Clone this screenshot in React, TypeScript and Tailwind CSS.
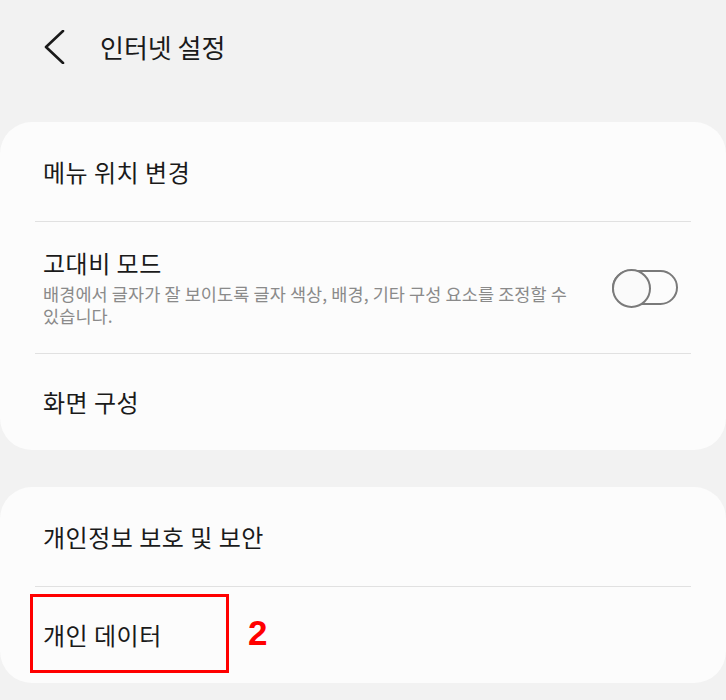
import type { ReactNode } from "react";

const font = { fontFamily: '"Noto Sans CJK KR", "Noto Sans", sans-serif' };

function Divider() {
  return <div className="h-px bg-[#e1e1e1]" />;
}

function Row({ h, children }: { h: string; children: ReactNode }) {
  return <div className={`relative flex items-center pl-2 ${h}`}>{children}</div>;
}

function Toggle() {
  return (
    <div className="relative mr-[13px] h-[35px] w-[66px] shrink-0 rounded-full border-2 border-[#7a7a7a]">
      <div className="absolute -left-[2px] -top-[3px] h-[39px] w-[39px] rounded-full border-2 border-[#7a7a7a] bg-[#fafafa]" />
    </div>
  );
}

export default function App() {
  return (
    <div className="h-[700px] w-[726px] overflow-hidden bg-[#f2f2f2] text-[#1a1a1a]" style={font}>
      {/* Header */}
      <div className="flex h-[94px] items-center">
        <svg className="ml-[44px]" width="21" height="34" viewBox="0 0 21 34" fill="none">
          <polyline points="19,1 2,17 19,33" stroke="#1a1a1a" strokeWidth="2.6" strokeLinecap="round" strokeLinejoin="round" />
        </svg>
        <span className="ml-[35px] text-[26px] leading-none">인터넷 설정</span>
      </div>

      {/* Card 1 */}
      <div className="mt-[28px] rounded-[32px] bg-[#fcfcfc] px-[35px]">
        <Row h="h-[99px]">
          <span className="text-[24px] tracking-[0.5px]">메뉴 위치 변경</span>
        </Row>
        <Divider />
        <Row h="h-[131px]">
          <div className="flex-1 pr-[28px]">
            <div className="text-[24px] leading-[30px] tracking-[0.5px]">고대비 모드</div>
            <div className="mt-[5px] break-keep text-[17.5px] leading-[22px] tracking-[0.1px] text-[#8a8a8a]">
              배경에서 글자가 잘 보이도록 글자 색상, 배경, 기타 구성 요소를 조정할 수 있습니다.
            </div>
          </div>
          <Toggle />
        </Row>
        <Divider />
        <Row h="h-[96px]">
          <span className="text-[24px] tracking-[0.5px]">화면 구성</span>
        </Row>
      </div>

      {/* Card 2 */}
      <div className="mt-[37px] rounded-[32px] bg-[#fcfcfc] px-[35px]">
        <Row h="h-[99px]">
          <span className="text-[24px] tracking-[0.5px]">개인정보 보호 및 보안</span>
        </Row>
        <Divider />
        <Row h="h-[96px]">
          <span className="text-[24px] tracking-[0.5px]">개인 데이터</span>
          <div className="absolute -left-[5px] top-[7px] h-[79px] w-[199px] border-[3px] border-[#ff0000]" />
          <span
            className="absolute left-[213px] top-[28px] text-[35px] font-bold leading-none text-[#ff0000]"
            style={{ fontFamily: '"Liberation Sans", Arial, sans-serif' }}
          >
            2
          </span>
        </Row>
      </div>
    </div>
  );
}
